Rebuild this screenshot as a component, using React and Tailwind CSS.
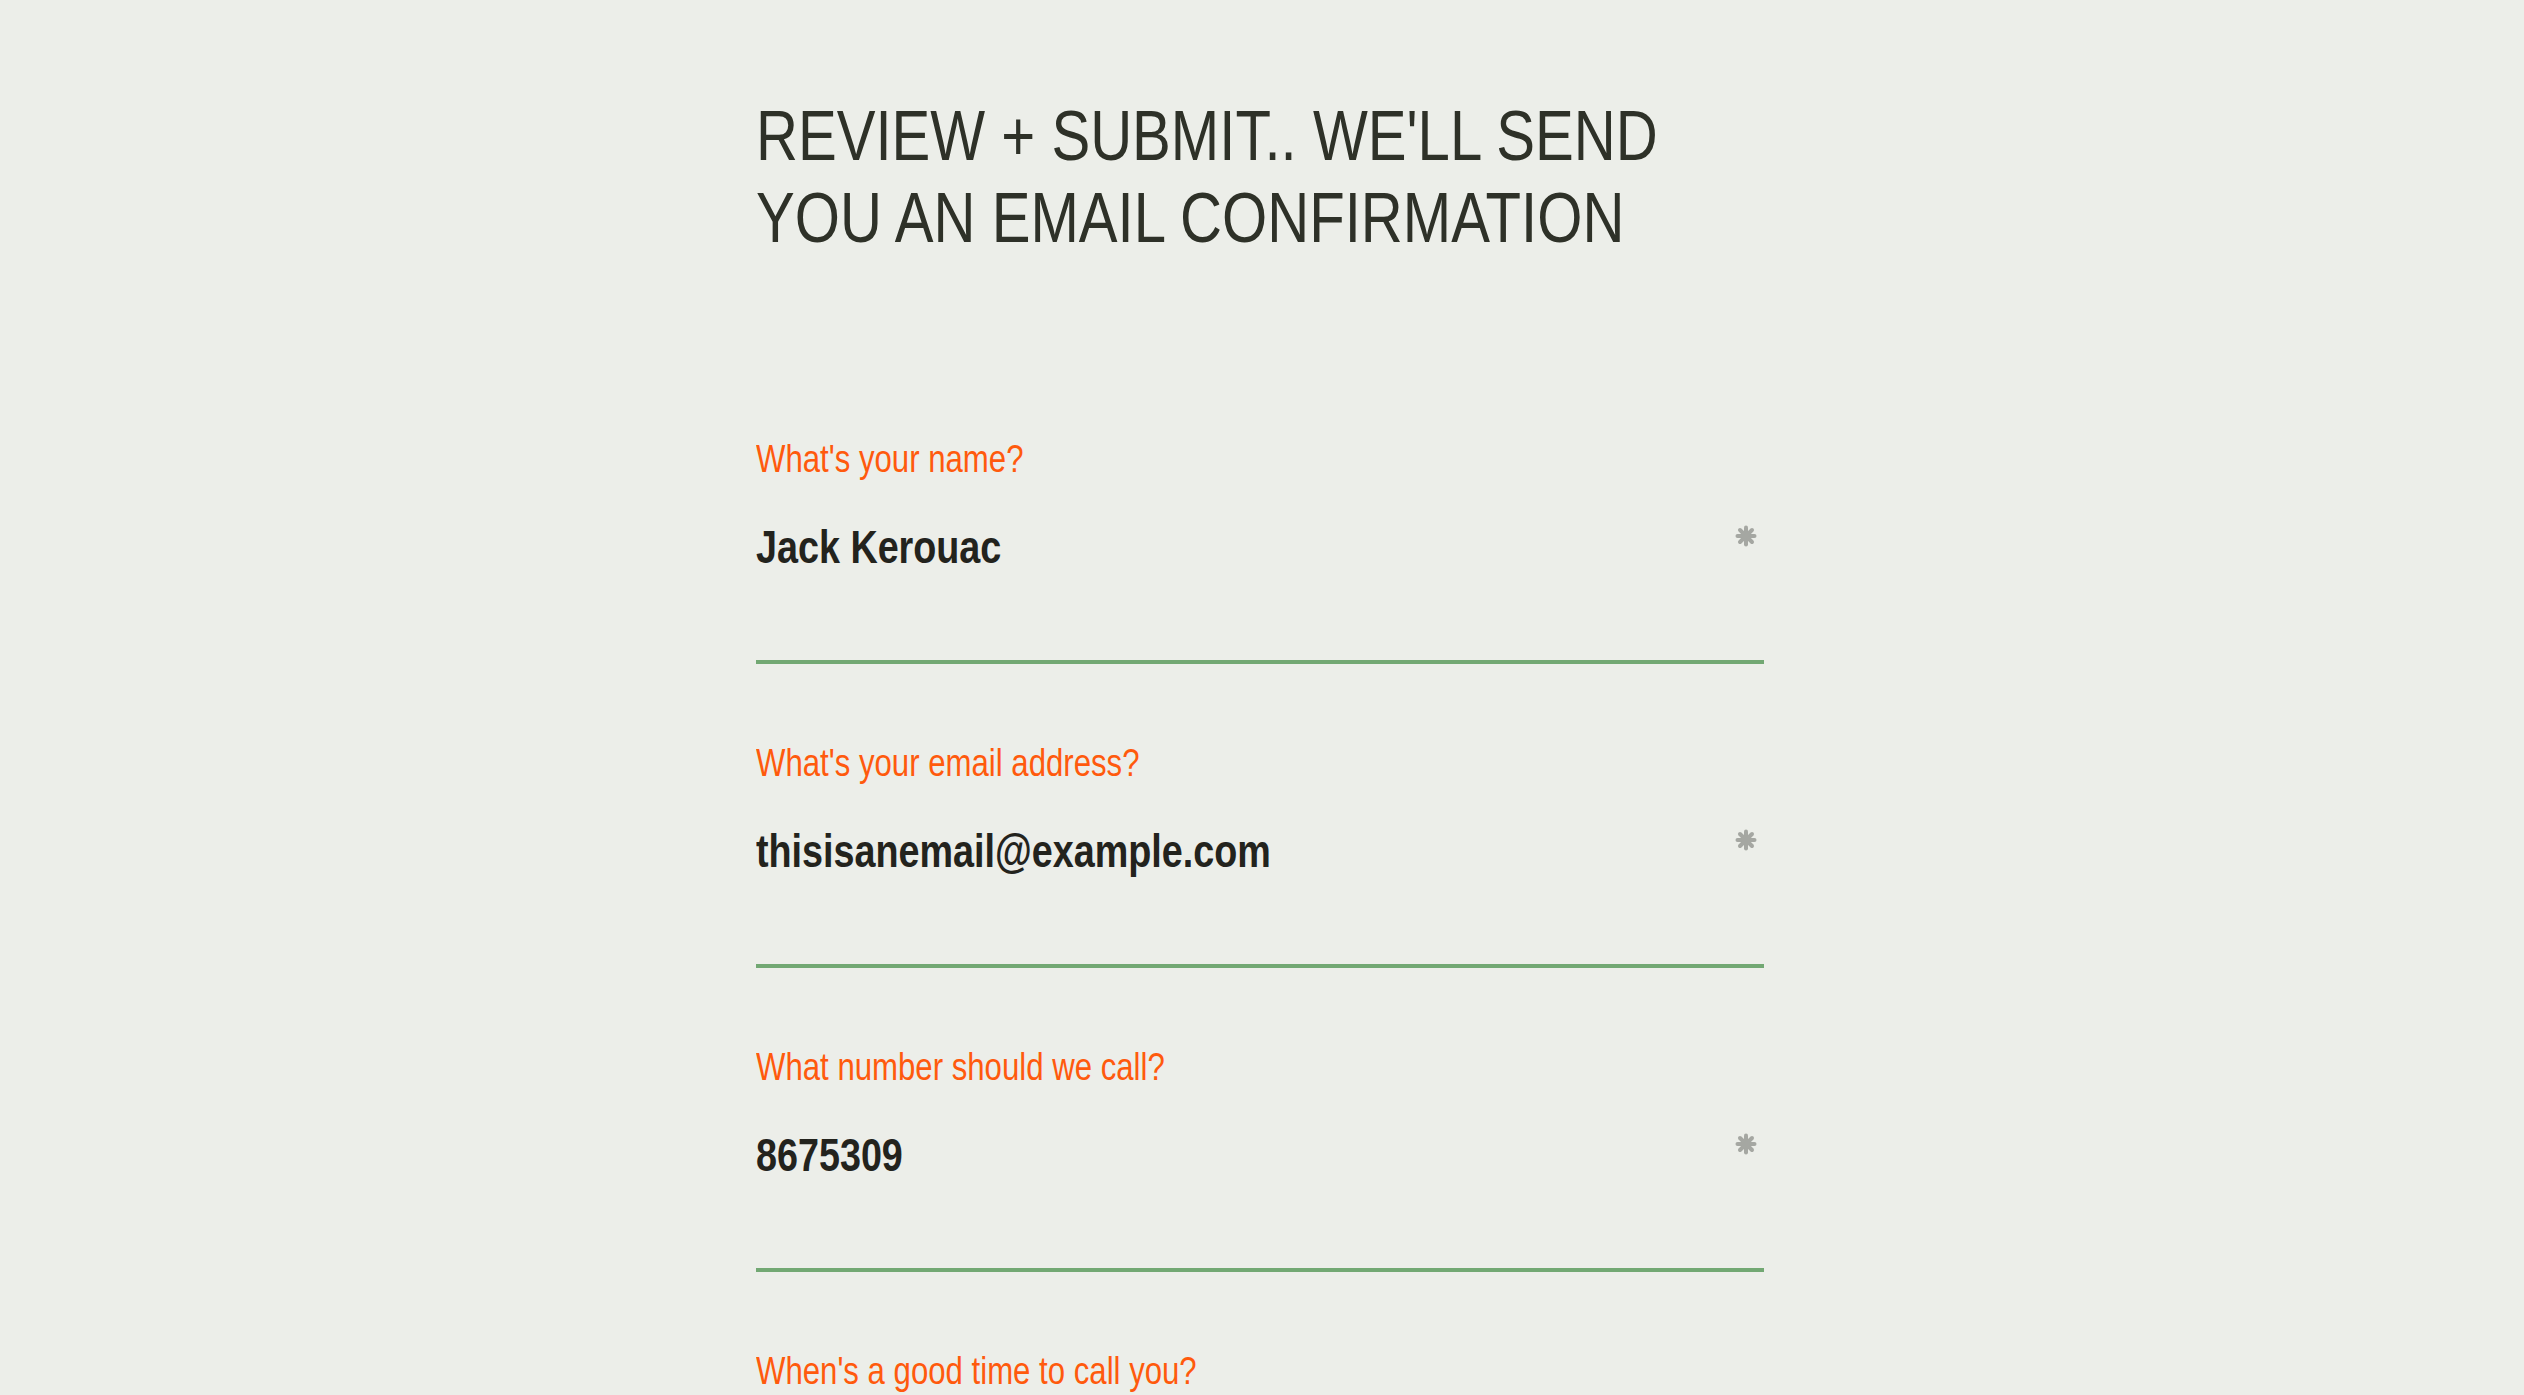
const fields = [
  { label: "What's your name?", value: 'Jack Kerouac' },
  { label: "What's your email address?", value: 'thisisanemail@example.com' },
  { label: 'What number should we call?', value: '8675309' },
  { label: "When's a good time to call you?", value: '' },
];

// narrow face is not installed, so Liberation Sans is squeezed to Arial Narrow widths
const narrow = 'inline-block whitespace-nowrap origin-left scale-x-[0.82]';
const narrowHead = 'inline-block whitespace-nowrap origin-left scale-x-[0.83]';

function Asterisk() {
  return (
    <svg width="22" height="22" viewBox="0 0 22 22" className="shrink-0 mt-[6px] mr-[7px]">
      <g stroke="#a5a7a2" strokeWidth="4" strokeLinecap="round">
        <line x1="11" y1="2.5" x2="11" y2="19.5" />
        <line x1="2.5" y1="11" x2="19.5" y2="11" />
        <line x1="5" y1="5" x2="17" y2="17" />
        <line x1="17" y1="5" x2="5" y2="17" />
      </g>
    </svg>
  );
}

export default function App() {
  return (
    <div className="min-h-screen bg-[#eceee9] font-['Liberation_Sans',Arial,sans-serif]">
      <div className="w-[1012px] mx-auto pr-[4px] pt-[95px]">
        <h1 className="flex flex-col items-start text-[70px] leading-[82px] font-normal text-[#2e3128] uppercase">
          <span className={narrowHead}>Review + Submit.. We'll send</span>
          <span className={narrowHead}>you an email confirmation</span>
        </h1>

        <div className="mt-[177px] flex flex-col">
          {fields.map((f) => (
            <div key={f.label} className="mb-[76px]">
              <label className="block text-[38px] leading-[46px] text-[#ff5a0d]">
                <span className={narrow}>{f.label}</span>
              </label>
              <div className="mt-[37px] flex items-start justify-between border-b-4 border-[#72a873] pb-[85px]">
                <span className={`${narrow} text-[46px] leading-[56px] font-bold text-[#23231d]`}>{f.value}</span>
                <Asterisk />
              </div>
            </div>
          ))}
        </div>
      </div>
    </div>
  );
}
